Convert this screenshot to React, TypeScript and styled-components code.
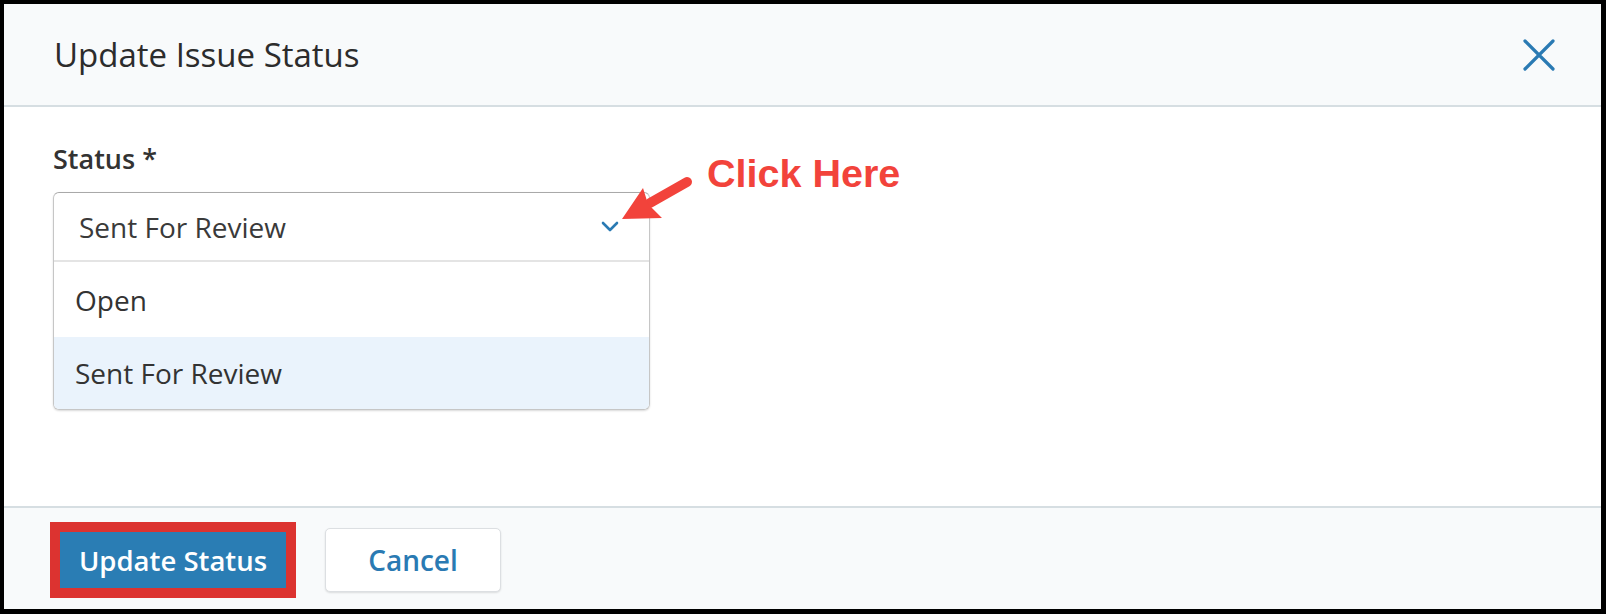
import styled, { createGlobalStyle } from "styled-components";

const GlobalStyle = createGlobalStyle`
  html, body {
    margin: 0;
    padding: 0;
    background: #000;
  }
  * {
    box-sizing: border-box;
  }
`;

const options = ["Open", "Sent For Review"];
const selected = "Sent For Review";

export default function App() {
  return (
    <>
      <GlobalStyle />
      <Frame>
        <Modal>
          <Header>
            <Title>Update Issue Status</Title>
            <CloseButton aria-label="Close">
              <svg width="32" height="32" viewBox="0 0 32 32">
                <path
                  d="M2 2 L30 30 M30 2 L2 30"
                  stroke="#2a7ab3"
                  strokeWidth="3.2"
                  strokeLinecap="round"
                />
              </svg>
            </CloseButton>
          </Header>
          <Body>
            <Label>Status *</Label>
            <Combo>
              <SelectRow>
                <span>{selected}</span>
                <svg width="18" height="11" viewBox="0 0 18 11">
                  <polyline
                    points="2,2 9,9 16,2"
                    fill="none"
                    stroke="#2a7ab3"
                    strokeWidth="2.6"
                    strokeLinecap="round"
                    strokeLinejoin="round"
                  />
                </svg>
              </SelectRow>
              {options.map((o, i) => (
                <OptionRow key={o} $active={o === selected} $tall={i === 0}>
                  {o}
                </OptionRow>
              ))}
            </Combo>

            {/* annotation drawn over the screenshot */}
            <Arrow width="90" height="60" viewBox="0 0 90 60">
              <line
                x1="77"
                y1="12"
                x2="40"
                y2="33"
                stroke="#f2433b"
                strokeWidth="10"
                strokeLinecap="round"
              />
              <polygon points="12,49 33,18 38,34 52,48" fill="#f2433b" />
            </Arrow>
            <Callout>Click Here</Callout>
          </Body>
          <Footer>
            <Highlight>
              <PrimaryButton>Update Status</PrimaryButton>
            </Highlight>
            <SecondaryButton>Cancel</SecondaryButton>
          </Footer>
        </Modal>
      </Frame>
    </>
  );
}

const Frame = styled.div`
  width: 1606px;
  height: 614px;
  padding: 4px 5px 5px 4px;
  background: #000;
`;

const Modal = styled.div`
  display: flex;
  flex-direction: column;
  height: 100%;
  background: #fff;
  font-family: "Open Sans", "Noto Sans", sans-serif;
  color: #2f2f2f;
`;

const Header = styled.div`
  height: 103px;
  flex-shrink: 0;
  display: flex;
  align-items: center;
  justify-content: space-between;
  padding: 0 46px 0 50px;
  background: #f8fafb;
  border-bottom: 2px solid #d6dee2;
`;

const Title = styled.h2`
  margin: 0;
  font-size: 33px;
  font-weight: 500;
  color: #2c2c2c;
  line-height: 40px;
`;

const CloseButton = styled.button`
  display: flex;
  padding: 0;
  border: none;
  background: none;
  cursor: pointer;
`;

const Body = styled.div`
  position: relative;
  flex: 1;
  padding: 35px 49px 0;
`;

const Label = styled.div`
  font-size: 27px;
  font-weight: 600;
  line-height: 34px;
  color: #333;
`;

const Combo = styled.div`
  width: 597px;
  margin-top: 16px;
  border: 1px solid #c6c6c6;
  border-top-color: #a9a9a9;
  border-radius: 6px;
  overflow: hidden;
  box-shadow: 0 1px 2px rgba(0, 0, 0, 0.15);
`;

const SelectRow = styled.div`
  height: 69px;
  display: flex;
  align-items: center;
  justify-content: space-between;
  padding: 0 30px 0 25px;
  border-bottom: 2px solid #e4e4e4;
  font-size: 28px;
  color: #3a3a3a;
`;

const OptionRow = styled.div<{ $active: boolean; $tall: boolean }>`
  height: ${(p) => (p.$tall ? 75 : 72)}px;
  display: flex;
  align-items: center;
  padding: 0 21px;
  font-size: 28px;
  color: #333;
  background: ${(p) => (p.$active ? "#eaf3fc" : "#fff")};
`;

const Arrow = styled.svg`
  position: absolute;
  left: 606px;
  top: 63px;
`;

const Callout = styled.div`
  position: absolute;
  left: 703px;
  top: 47px;
  font-family: "Liberation Sans", Arial, sans-serif;
  font-weight: 700;
  font-size: 39.5px;
  line-height: 39px;
  color: #f2433b;
  white-space: nowrap;
`;

const Footer = styled.div`
  height: 103px;
  flex-shrink: 0;
  display: flex;
  align-items: center;
  gap: 29px;
  padding: 3px 0 0 46px;
  background: #f8fafb;
  border-top: 2px solid #d6dee2;
`;

const Highlight = styled.div`
  border: 10px solid #dc3330;
`;

const PrimaryButton = styled.button`
  display: block;
  width: 226px;
  height: 56px;
  border: none;
  background: #2a7db4;
  color: #fff;
  font-family: inherit;
  font-size: 27.5px;
  font-weight: 600;
  cursor: pointer;
`;

const SecondaryButton = styled.button`
  width: 176px;
  height: 64px;
  border: 1px solid #dcdfe2;
  border-radius: 5px;
  background: #fff;
  box-shadow: 0 1px 2px rgba(0, 0, 0, 0.12);
  color: #2a7ab3;
  font-family: inherit;
  font-size: 28px;
  font-weight: 600;
  cursor: pointer;
`;
